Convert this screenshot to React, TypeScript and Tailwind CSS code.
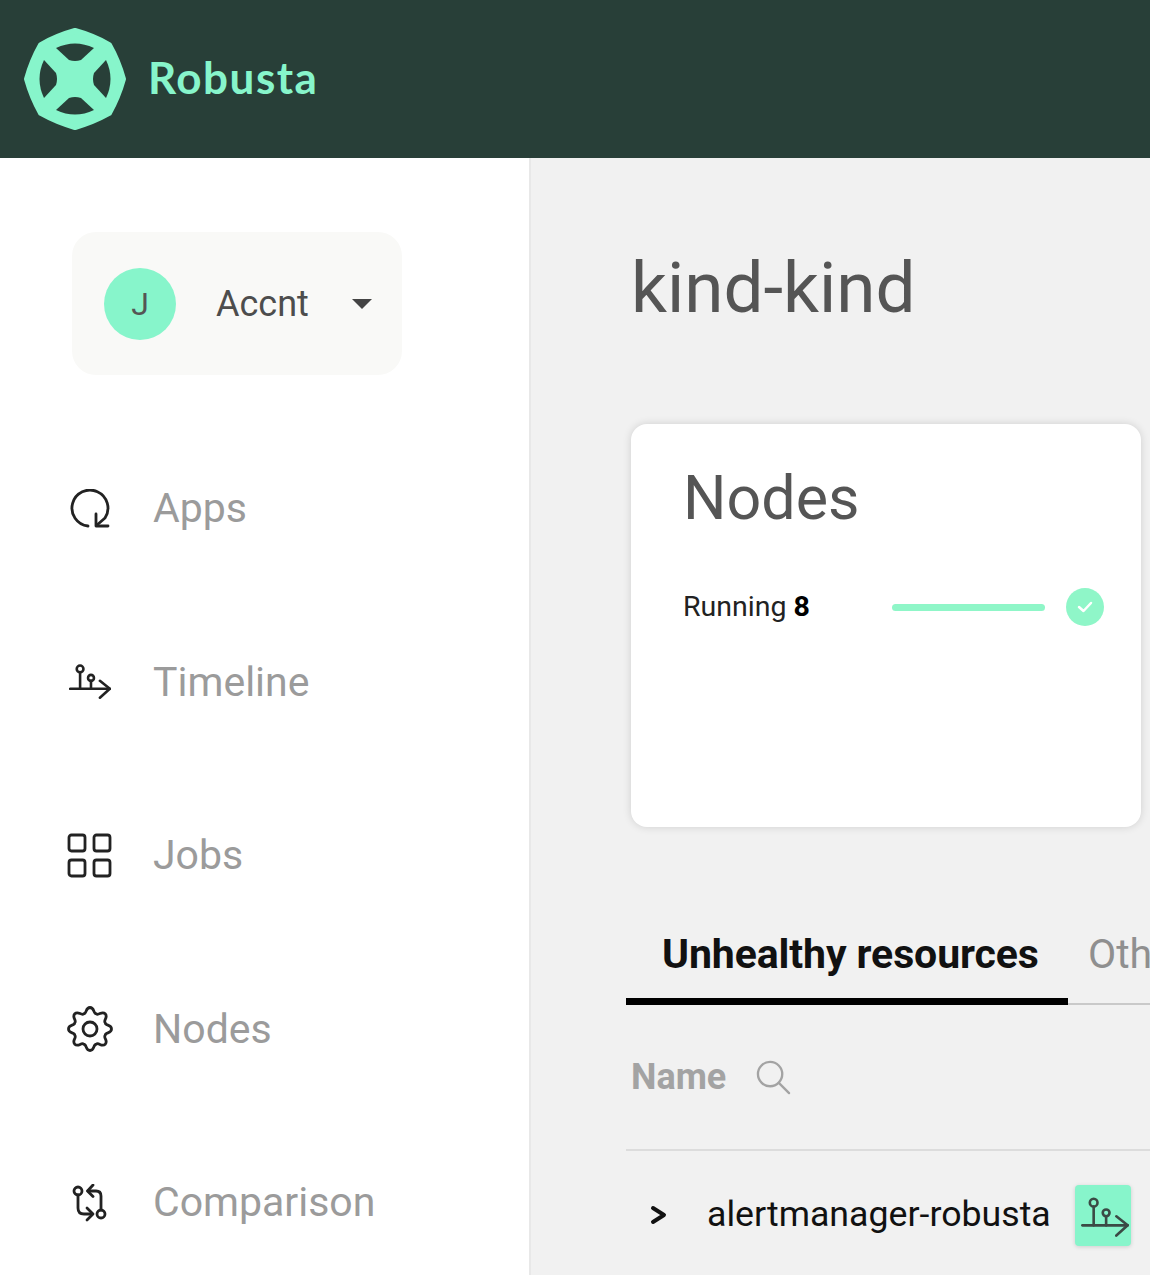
const mint = "#87f5cb";

function Logo() {
  return (
    <svg width="104" height="104" viewBox="0 0 104 104" className="shrink-0">
      <path
        fill={mint}
        stroke={mint}
        strokeWidth="6"
        strokeLinejoin="round"
        d="M52 4 Q70 9 86 18 Q95 34 100 52 Q95 70 86 86 Q70 95 52 100 Q34 95 18 86 Q9 70 4 52 Q9 34 18 18 Q34 9 52 4 Z"
      />
      <path fill="#283f38" d="M33 21 Q52 12 71 21 L58 33 Q52 35 46 33 Z" />
      <path fill="#283f38" d="M33 83 Q52 92 71 83 L58 71 Q52 69 46 71 Z" />
      <path fill="#283f38" d="M21 33 Q12 52 21 71 L33 58 Q35 52 33 46 Z" />
      <path fill="#283f38" d="M83 33 Q92 52 83 71 L71 58 Q69 52 71 46 Z" />
    </svg>
  );
}

function TimelineIcon({ size = 42, color = "#222", width = 2.6 }: { size?: number; color?: string; width?: number }) {
  return (
    <svg width={size} height={size * 0.85} viewBox="0 0 42 36" fill="none" stroke={color} strokeWidth={width} strokeLinecap="round" strokeLinejoin="round">
      <circle cx="11" cy="5" r="3.4" />
      <path d="M11 8.5V25" />
      <circle cx="22" cy="14" r="3" />
      <path d="M22 17V25" />
      <path d="M1 25H41" />
      <path d="M31 17L41 25L31 34" />
    </svg>
  );
}

function AppsIcon() {
  return (
    <svg width="40" height="40" viewBox="0 0 40 40" fill="none" stroke="#222" strokeWidth="2.8" strokeLinecap="round" strokeLinejoin="round">
      <path d="M18 37 A18 18 0 1 1 35 29 L27 36" />
      <path d="M26 25V37H38" />
    </svg>
  );
}

function JobsIcon() {
  return (
    <svg width="46" height="46" viewBox="0 0 46 46" fill="none" stroke="#222" strokeWidth="2.8">
      <rect x="2" y="2" width="16" height="16" rx="2.5" />
      <rect x="27" y="2" width="16" height="16" rx="2.5" />
      <rect x="2" y="27" width="16" height="16" rx="2.5" />
      <rect x="27" y="27" width="16" height="16" rx="2.5" />
    </svg>
  );
}

function GearIcon() {
  const teeth = 8;
  const cx = 23;
  const cy = 23;
  let d = "";
  for (let i = 0; i < teeth; i++) {
    const a0 = (i * 2 * Math.PI) / teeth - Math.PI / 2;
    const step = (2 * Math.PI) / teeth;
    const p = (r: number, a: number) => `${(cx + r * Math.cos(a)).toFixed(2)} ${(cy + r * Math.sin(a)).toFixed(2)}`;
    d += i === 0 ? `M${p(21.5, a0)}` : "";
    d += ` C${p(22, a0 + step * 0.28)} ${p(15.5, a0 + step * 0.25)} ${p(16.5, a0 + step * 0.5)}`;
    d += ` C${p(15.5, a0 + step * 0.75)} ${p(22, a0 + step * 0.72)} ${p(21.5, a0 + step)}`;
  }
  return (
    <svg width="46" height="46" viewBox="0 0 46 46" fill="none" stroke="#222" strokeWidth="2.8" strokeLinejoin="round">
      <path d={d + "Z"} />
      <circle cx="23" cy="23" r="7" />
    </svg>
  );
}

function CompareIcon() {
  return (
    <svg width="36" height="38" viewBox="0 0 36 38" fill="none" stroke="#222" strokeWidth="2.8" strokeLinecap="round" strokeLinejoin="round">
      <circle cx="6" cy="7" r="4" />
      <circle cx="29" cy="30" r="4" />
      <path d="M6 11V24Q6 30 12 30H20" />
      <path d="M15 24L21 30L15 36" />
      <path d="M29 26V12Q29 7 24 7H16" />
      <path d="M21 1L15.5 7L21 12.5" />
    </svg>
  );
}

function NavItem({ icon, label }: { icon: React.ReactNode; label: string }) {
  return (
    <div className="flex h-[173.5px] shrink-0 items-center">
      <div className="flex w-[84px] justify-center">{icon}</div>
      <span className="ml-[21px] text-[41px] leading-none text-[#9b9b9b]">{label}</span>
    </div>
  );
}

export default function App() {
  return (
    <div className="flex h-[1275px] w-[1150px] flex-col overflow-hidden bg-white font-['Roboto',sans-serif]">
      <header className="flex h-[158px] shrink-0 items-center gap-[21px] bg-[#283f38] pl-[23px]">
        <Logo />
        <span className="-mt-[4px] font-['Lato',sans-serif] text-[44px] font-bold leading-none tracking-[1.5px] text-[#87f5cb]">Robusta</span>
      </header>
      <div className="flex min-h-0 flex-1">
        <aside className="flex w-[531px] shrink-0 flex-col overflow-hidden border-r-2 border-[#e8e8e8] bg-white pl-[48px] pt-[74px]">
          <div className="ml-[24px] flex h-[143px] w-[330px] shrink-0 items-center rounded-[24px] bg-[#f9f9f7] pl-[32px]">
            <div className="flex h-[72px] w-[72px] items-center justify-center rounded-full bg-[#87f5cb] text-[32px] text-[#555]">J</div>
            <span className="ml-[40px] text-[36px] leading-none text-[#4d4d4d]">Accnt</span>
            <span className="ml-[43px] h-0 w-0 border-x-[10px] border-t-[10px] border-x-transparent border-t-[#444]" />
          </div>
          <nav className="mt-[47px] flex flex-col">
            <NavItem icon={<AppsIcon />} label="Apps" />
            <NavItem icon={<TimelineIcon />} label="Timeline" />
            <NavItem icon={<JobsIcon />} label="Jobs" />
            <NavItem icon={<GearIcon />} label="Nodes" />
            <NavItem icon={<CompareIcon />} label="Comparison" />
          </nav>
        </aside>
        <main className="min-w-0 flex-1 overflow-hidden bg-[#f1f1f1] pl-[100px] pt-[86px]">
          <h1 className="text-[71px] leading-[88px] text-[#555]">kind-kind</h1>
          <section className="mt-[92px] flex h-[403px] w-[510px] flex-col rounded-[16px] bg-white pl-[52px] pr-[36px] pt-[40px] shadow-[0_0_8px_rgba(0,0,0,0.14)]">
            <h2 className="text-[61px] leading-[68px] text-[#555]">Nodes</h2>
            <div className="mt-[56px] flex items-center">
              <span className="w-[209px] text-[28.5px] leading-none text-[#222]">Running <b className="font-bold text-black">8</b></span>
              <div className="h-[7px] w-[153px] rounded-full bg-[#8ff6c8]" />
              <div className="ml-[21px] flex h-[38px] w-[38px] items-center justify-center rounded-full bg-[#8ff6c8]">
                <svg width="20" height="16" viewBox="0 0 20 16" fill="none" stroke="#fff" strokeWidth="2.5" strokeLinecap="round" strokeLinejoin="round"><path d="M4 8L8.5 12L16 4" /></svg>
              </div>
            </div>
          </section>
          <div className="mt-[97px] -ml-[5px] flex h-[81px] w-[600px] items-start border-b-2 border-[#c9c9c9]">
            <div className="-mb-[2px] h-[81px] w-[442px] shrink-0 border-b-[7px] border-black pl-[36px] pt-[4px]">
              <span className="whitespace-nowrap text-[41px] font-bold leading-[52px] tracking-[-0.1px] text-[#111]">Unhealthy resources</span>
            </div>
            <span className="ml-[20px] whitespace-nowrap pt-[4px] text-[41px] leading-[52px] text-[#8f8f8f]">Other</span>
          </div>
          <div className="-ml-[5px] flex h-[146px] w-[600px] items-start border-b-2 border-[#dcdcdc] pl-[5px] pt-[54px]">
            <span className="text-[36px] font-bold leading-none text-[#a3a3a3]">Name</span>
            <svg className="ml-[30px] mt-[1px]" width="35" height="35" viewBox="0 0 36 36" fill="none" stroke="#a3a3a3" strokeWidth="2.4" strokeLinecap="round"><circle cx="14.5" cy="14.5" r="12.5" /><path d="M24 24L34 34" /></svg>
          </div>
          <div className="-ml-[5px] flex h-[128px] w-[600px] items-center pl-[24px]">
            <svg width="18" height="24" viewBox="0 0 18 24" fill="none" stroke="#111" strokeWidth="4" strokeLinecap="round" strokeLinejoin="round"><path d="M3 5L14 12L3 19" /></svg>
            <span className="ml-[39px] text-[35.7px] leading-none text-[#111]">alertmanager-robusta</span>
            <div className="ml-[24px] flex h-[61px] w-[56px] shrink-0 items-center justify-center rounded-[4px] bg-[#87f5cb] pl-[5px] pt-[5px] shadow-[0_1px_4px_rgba(0,0,0,0.15)]">
              <TimelineIcon size={48} color="#3b4a45" width={2.3} />
            </div>
          </div>
        </main>
      </div>
    </div>
  );
}
